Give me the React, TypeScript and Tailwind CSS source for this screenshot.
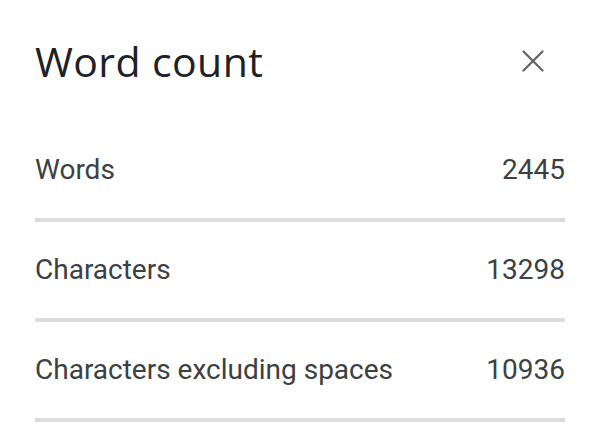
import React from 'react';

const rows = [
  { label: 'Words', value: '2445' },
  { label: 'Characters', value: '13298' },
  { label: 'Characters excluding spaces', value: '10936' },
];

const App: React.FC = () => {
  return (
    <div className="w-[598px] h-[442px] bg-white pl-[35px] pr-[33px] overflow-hidden">
      <div className="h-[122px] pt-[36px]">
        <div className="h-[50px] flex items-center justify-between">
          <h1
            className="text-[41px] leading-none text-[#202124] tracking-[0.4px]"
            style={{ fontFamily: '"Open Sans", Roboto, sans-serif' }}
          >
            Word count
          </h1>
          <button className="w-[36px] h-[36px] mr-[14px] flex items-center justify-center text-[#5f6368]">
            <svg width="22" height="22" viewBox="0 0 22 22" fill="none">
              <path d="M1.5 1.5 L20.5 20.5 M20.5 1.5 L1.5 20.5" stroke="currentColor" strokeWidth="2.2" strokeLinecap="round" />
            </svg>
          </button>
        </div>
      </div>
      {rows.map(row => (
        <div key={row.label}>
          <div
            className="h-[96px] flex items-center justify-between text-[28px] text-[#3c4043]"
            style={{ fontFamily: 'Roboto, "Liberation Sans", sans-serif' }}
          >
            <span>{row.label}</span>
            <span>{row.value}</span>
          </div>
          <div className="h-[4px] bg-[#dadce0]" />
        </div>
      ))}
    </div>
  );
};

export default App;
